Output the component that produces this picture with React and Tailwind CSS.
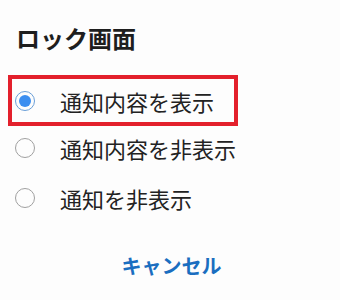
import React from "react";

const options = ["通知内容を表示", "通知内容を非表示", "通知を非表示"];

const Radio = ({ checked }) => (
  <div
    className={
      "w-[20px] h-[20px] rounded-full border flex items-center justify-center shrink-0 " +
      (checked ? "border-[#6a9fd8]" : "border-[#a0a0a0]")
    }
  >
    {checked && <div className="w-[12px] h-[12px] rounded-full bg-[#3b8ef0]"></div>}
  </div>
);

export default function App() {
  return (
    <div
      className="w-[340px] h-[300px] bg-[#fdfdfd] text-[#222222] overflow-hidden"
      style={{ fontFamily: '"Noto Sans CJK JP", "Noto Sans", sans-serif' }}
    >
      <div className="pt-[22px] pl-[16px] h-[75px]">
        <h1 className="text-[24px] leading-[32px] font-bold text-[#1e1e1e]">ロック画面</h1>
      </div>

      <div className="pl-[8px] flex flex-col">
        {options.map((label, i) => (
          <div
            key={label}
            className={
              "flex items-center border-4 pl-[3px] " +
              (i === 0
                ? "w-[230px] h-[51px] border-[#e3202c]"
                : "w-[300px] h-[50px] border-transparent " + (i === 1 ? "-mt-[3px]" : ""))
            }
          >
            <Radio checked={i === 0} />
            <span className="ml-[25px] text-[22px] leading-[30px]">{label}</span>
          </div>
        ))}
      </div>

      <div className="mt-[28px] flex justify-center pl-[3px]">
        <button className="text-[20px] leading-[30px] font-bold text-[#1a6ec0]">キャンセル</button>
      </div>
    </div>
  );
}
